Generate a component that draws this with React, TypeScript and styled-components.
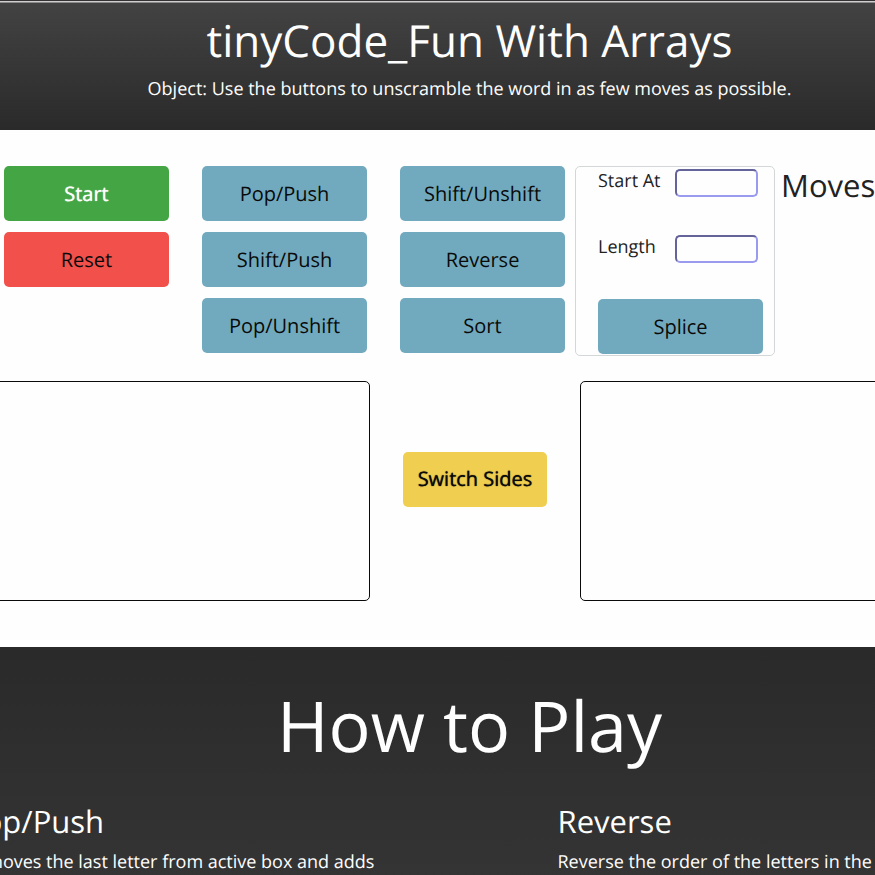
import React, { useState } from "react";
import styled, { createGlobalStyle } from "styled-components";

const GlobalStyle = createGlobalStyle`
  *, *::before, *::after { box-sizing: border-box; }
  body {
    margin: 0;
    background: #fefefe;
    color: #222;
    font-family: "Open Sans", "Noto Sans", sans-serif;
    font-size: 18px;
    line-height: 28px;
    text-rendering: geometricPrecision;
  }
  h1, h2, h3, p { margin: 0; font-weight: 400; }
`;

const Viewport = styled.div`
  overflow: hidden;
  min-height: 100vh;
  display: flex;
  flex-direction: column;
`;

const Stage = styled.div`
  flex: 1;
  display: flex;
  flex-direction: column;
  width: calc(100% + 186px);
  margin-left: -61px;
`;

const BodyText = styled.p`
  font-size: 18px;
  line-height: 28px;
`;

const Header = styled.header`
  border-top: 1px solid #333;
  background: linear-gradient(#434343, #2a2a2a);
  color: #fefefe;
  text-align: center;
  padding-bottom: 27px;

  &::before {
    content: "";
    display: block;
    height: 2px;
    background: #d0cecf;
    border-bottom: 1px solid #8c8a8b;
  }
`;

const Title = styled.h1`
  font-size: 44px;
  line-height: 60px;
  padding-top: 7px;
  margin-bottom: 5px;
`;

const Controls = styled.section`
  display: grid;
  grid-template-columns: 165px 165px 165px 200px 1fr;
  align-items: start;
  column-gap: 33px;
  padding: 36px 0 25px 65px;
`;

const Stack = styled.div`
  display: grid;
  gap: 11px;
`;

const tones = {
  start: "#43a543",
  reset: "#f2504b",
  action: "#71aabf",
  swap: "#f0ce50",
};

const Button = styled.button<{ $tone: keyof typeof tones; $strong?: boolean }>`
  height: 55px;
  padding: 0 15px;
  border: 0;
  border-radius: 5px;
  background: ${(p) => tones[p.$tone]};
  color: ${(p) => (p.$tone === "start" ? "#fefefe" : "#0a0a0a")};
  font: inherit;
  font-size: 20px;
  text-rendering: inherit;
  text-shadow: ${(p) => (p.$strong ? "0 0 1px currentColor" : "none")};
  cursor: pointer;
`;

const SplicePanel = styled.form`
  height: 190px;
  margin-left: -23px;
  width: 200px;
  padding: 2px 11px 1px 22px;
  border: 1px solid #d3d7d7;
  border-radius: 5px;
  display: flex;
  flex-direction: column;
  justify-content: space-between;
`;

const Fields = styled.div`
  display: grid;
  gap: 38px;
`;

const Field = styled.label`
  display: flex;
  justify-content: space-between;
  padding-right: 5px;
  font-size: 18px;
  line-height: 24px;
`;

const NumberBox = styled.input`
  width: 83px;
  height: 28px;
  padding: 2px 6px;
  border: 2px inset #9a9aef;
  border-radius: 5px;
  background: #fefefe;
  font: inherit;
`;

const Moves = styled.h2`
  margin-left: -50px;
  font-size: 31px;
  line-height: 40px;
  white-space: nowrap;
`;

const Board = styled.section`
  display: grid;
  grid-template-columns: 431px 210px 1fr;
  align-items: center;
  margin-bottom: 46px;
`;

const LetterBox = styled.div`
  height: 220px;
  border: 1px solid #0a0a0a;
  border-radius: 5px;
`;

const Middle = styled.div`
  display: flex;
  justify-content: center;
  padding-bottom: 24px;
`;

const Guide = styled.section`
  flex: 1;
  height: 228px;
  background: linear-gradient(#2a2a2a, #343434);
  color: #fefefe;
`;

const GuideTitle = styled.h2`
  padding-top: 28px;
  font-size: 70px;
  line-height: 100px;
  text-align: center;
`;

const Rules = styled.div`
  display: grid;
  grid-template-columns: 1fr 1fr;
  column-gap: 150px;
  padding: 27px 0 0 26px;
`;

const Rule = styled.article`
  white-space: nowrap;
`;

const RuleName = styled.h3`
  font-size: 31px;
  line-height: 40px;
  margin-bottom: 6px;
`;

const columns = [
  ["Pop/Push", "Shift/Push", "Pop/Unshift"],
  ["Shift/Unshift", "Reverse", "Sort"],
];

const rules = [
  { name: "Pop/Push", text: "Removes the last letter from active box and adds" },
  { name: "Reverse", text: "Reverse the order of the letters in the active box." },
];

export default function App() {
  const [startAt, setStartAt] = useState("");
  const [length, setLength] = useState("");

  return (
    <Viewport>
      <GlobalStyle />
      <Stage>
        <Header>
          <Title>tinyCode_Fun With Arrays</Title>
          <BodyText>
            Object: Use the buttons to unscramble the word in as few moves as possible.
          </BodyText>
        </Header>
        <Controls>
          <Stack>
            <Button type="button" $tone="start" $strong>Start</Button>
            <Button type="button" $tone="reset">Reset</Button>
          </Stack>
          {columns.map((names) => (
            <Stack key={names[0]}>
              {names.map((name) => (
                <Button key={name} type="button" $tone="action">{name}</Button>
              ))}
            </Stack>
          ))}
          <SplicePanel onSubmit={(e) => e.preventDefault()}>
            <Fields>
              <Field>
                Start At
                <NumberBox value={startAt} onChange={(e) => setStartAt(e.target.value)} />
              </Field>
              <Field>
                Length
                <NumberBox value={length} onChange={(e) => setLength(e.target.value)} />
              </Field>
            </Fields>
            <Button type="submit" $tone="action">Splice</Button>
          </SplicePanel>
          <Moves>Moves</Moves>
        </Controls>
        <Board>
          <LetterBox />
          <Middle>
            <Button type="button" $tone="swap" $strong>Switch Sides</Button>
          </Middle>
          <LetterBox />
        </Board>
        <Guide>
          <GuideTitle>How to Play</GuideTitle>
          <Rules>
            {rules.map((rule) => (
              <Rule key={rule.name}>
                <RuleName>{rule.name}</RuleName>
                <BodyText>{rule.text}</BodyText>
              </Rule>
            ))}
          </Rules>
        </Guide>
      </Stage>
    </Viewport>
  );
}
